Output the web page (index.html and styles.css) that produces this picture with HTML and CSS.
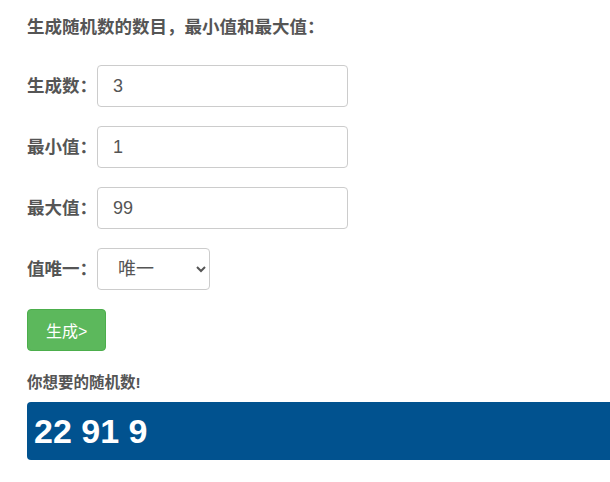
FILE: index.html
```html
<!DOCTYPE html>
<html lang="zh-CN">
<head>
    <meta charset="UTF-8">
    <title>随机数生成</title>
    <link rel="stylesheet" href="styles.css">
</head>
<body>
    <div class="container">
        <h4 class="title">生成随机数的数目，最小值和最大值：</h4>
        <form class="gen-form">
            <div class="form-row">
                <label for="count">生成数：</label>
                <input type="text" id="count" class="form-control" value="3">
            </div>
            <div class="form-row">
                <label for="min">最小值：</label>
                <input type="text" id="min" class="form-control" value="1">
            </div>
            <div class="form-row">
                <label for="max">最大值：</label>
                <input type="text" id="max" class="form-control" value="99">
            </div>
            <div class="form-row">
                <label for="unique">值唯一：</label>
                <select id="unique" class="form-control select">
                    <option>唯一</option>
                    <option>不唯一</option>
                </select>
            </div>
            <button type="button" class="btn btn-success">生成&gt;</button>
        </form>
        <h4 class="result-title">你想要的随机数!</h4>
        <div class="result">22 91 9</div>
    </div>
</body>
</html>
```

FILE: styles.css
```css
body {
    margin: 0;
    font-family: "Liberation Sans", "Noto Sans CJK SC", sans-serif;
    font-size: 15px;
    color: #555;
    background: #fff;
}
.container {
    padding: 17px 0 0 27px;
}
.title {
    margin: 0 0 28px;
    font-size: 17.5px;
    font-weight: bold;
    line-height: 20px;
}
.form-row {
    display: flex;
    align-items: center;
    margin-bottom: 19px;
}
.form-row label {
    flex: 0 0 70px;
    min-width: 0;
    white-space: nowrap;
    font-weight: bold;
    font-size: 17.5px;
    line-height: 24px;
    color: #555;
}
.form-control {
    box-sizing: border-box;
    width: 251px;
    height: 42px;
    padding: 6px 15px;
    font-family: inherit;
    font-size: 18px;
    color: #555;
    border: 1px solid #ccc;
    border-radius: 4px;
    background: #fff;
}
.select {
    width: 113px;
    padding: 6px 6px 6px 16px;
}
.btn {
    display: block;
    height: 42px;
    padding: 0 18px;
    font-family: inherit;
    font-size: 16px;
    border-radius: 4px;
    cursor: pointer;
}
.btn-success {
    background-color: #5cb85c;
    border: 1px solid #4cae4c;
    color: #fff;
}
.result-title {
    margin: 22px 0 9px;
    font-size: 15.5px;
    font-weight: bold;
    line-height: 20px;
}
.result {
    height: 58px;
    line-height: 58px;
    padding-left: 7px;
    background-color: #01528f;
    border-radius: 4px 0 0 4px;
    color: #fff;
    font-size: 34px;
    font-weight: bold;
}
```
